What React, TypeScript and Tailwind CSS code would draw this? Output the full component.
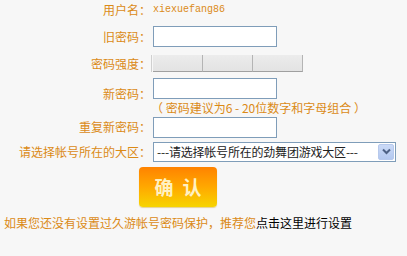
import React from "react";

const cjk = { fontFamily: '"Noto Sans CJK SC", "Noto Sans", sans-serif' };

function Label({ children }: { children: React.ReactNode }) {
  return (
    <div className="w-[151px] shrink-0 text-right text-[12px] leading-[14px] text-[#db8a16]" style={cjk}>
      {children}
    </div>
  );
}

function Input() {
  return <div className="w-[124px] h-[21px] border border-[#7f9db9] bg-white" />;
}

export default function App() {
  return (
    <div className="w-[407px] h-[256px] bg-[#f7f7f7] relative overflow-hidden" style={cjk}>
      <div className="flex flex-col">
        <div className="flex items-center h-[20px]">
          <Label>用户名：</Label>
          <div className="pl-[2px] text-[10px] leading-[12px] text-[#db8a16]" style={{ fontFamily: '"Liberation Mono", monospace' }}>
            xiexuefang86
          </div>
        </div>
        <div className="flex items-center h-[29px] pt-[4px]">
          <Label>旧密码：</Label>
          <div className="pl-[2px]"><Input /></div>
        </div>
        <div className="flex items-center h-[25px] pt-[4px]">
          <Label>密码强度：</Label>
          <div className="pl-[1px] flex border-l border-l-[#d0d0d0]">
            {[0, 1, 2].map((i) => (
              <div key={i} className="w-[50px] h-[17px] bg-gradient-to-b from-[#ececec] to-[#e3e3e3] border-b border-b-[#a0a0a0] border-r border-r-[#b4b4b4]" />
            ))}
          </div>
        </div>
        <div className="flex items-center h-[40px]">
          <Label>新密码：</Label>
          <div className="pl-[2px] flex flex-col pt-[4px]">
            <Input />
            <div className="text-[12px] leading-[14px] mt-[2px] -ml-[2px] text-[#db8a16] whitespace-nowrap">（ 密码建议为6 - 20位数字和字母组合 ）</div>
          </div>
        </div>
        <div className="flex items-center h-[26px]">
          <Label>重复新密码：</Label>
          <div className="pl-[2px]"><Input /></div>
        </div>
        <div className="flex items-center h-[23px]">
          <Label>请选择帐号所在的大区：</Label>
          <div className="pl-[2px]">
            <div className="w-[243px] h-[20px] border border-[#7f9db9] bg-white flex items-center">
              <div className="flex-1 min-w-0 pl-[3px] text-[12px] leading-[14px] text-[#222] whitespace-nowrap tracking-[-0.2px]">---请选择帐号所在的劲舞团游戏大区---</div>
              <div className="w-[16px] h-[16px] mr-[1px] shrink-0 bg-gradient-to-b from-[#cbdaf7] to-[#b3c8ef] border border-[#b7c9ec] rounded-[2px] flex items-center justify-center">
                <svg width="9" height="7" viewBox="0 0 9 7">
                  <path d="M1 1.5 L4.5 5 L8 1.5" stroke="#4d6185" strokeWidth="2" fill="none" />
                </svg>
              </div>
            </div>
          </div>
        </div>
        <div className="pl-[139px] pt-[4px]">
          <div className="w-[78px] h-[40px] rounded-[4px] bg-gradient-to-b from-[#ff8200] via-[#ffa800] to-[#f6d400] flex items-center justify-center shadow-[0_1px_1px_rgba(200,150,0,0.4)]">
            <span className="text-[19px] font-bold text-[#fff1c2] tracking-[9px] pl-[9px]" style={cjk}>确认</span>
          </div>
        </div>
        <div className="pl-[4px] pt-[9px] text-[12px] leading-[14px] whitespace-nowrap">
          <span className="text-[#db8a16]">如果您还没有设置过久游帐号密码保护，推荐您</span>
          <span className="text-black">点击这里进行设置</span>
        </div>
      </div>
    </div>
  );
}
